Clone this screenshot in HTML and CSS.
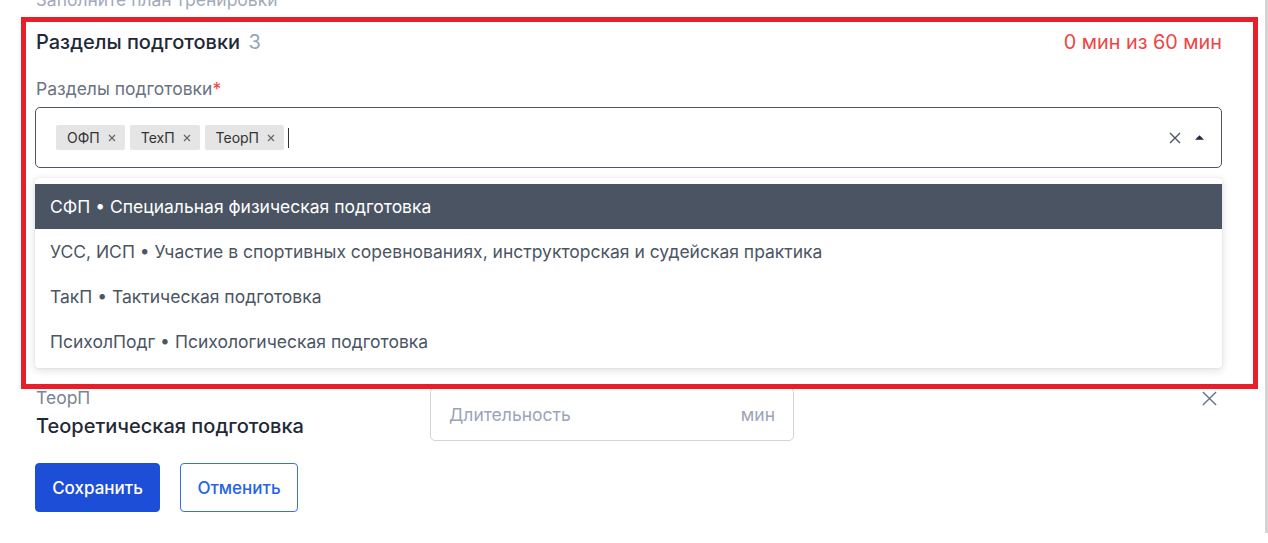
FILE: index.html
```html
<!DOCTYPE html>
<html lang="ru">
<head>
    <meta charset="UTF-8">
    <meta name="viewport" content="width=device-width, initial-scale=1.0">
    <title>План тренировки</title>
    <link rel="stylesheet" href="styles.css">
</head>
<body>
    <div class="page">
        <p class="subtitle">Заполните план тренировки</p>

        <div class="section-head">
            <h2 class="section-title">Разделы подготовки <span class="count">3</span></h2>
            <span class="time-total">0 мин из 60 мин</span>
        </div>

        <label class="field-label">Разделы подготовки<span class="req">*</span></label>
        <div class="select">
            <div class="select-box">
                <div class="chips">
                    <span class="chip">ОФП <svg class="chip-x" viewBox="0 0 8 8"><path d="M1 1L7 7M7 1L1 7"/></svg></span>
                    <span class="chip">ТехП <svg class="chip-x" viewBox="0 0 8 8"><path d="M1 1L7 7M7 1L1 7"/></svg></span>
                    <span class="chip">ТеорП <svg class="chip-x" viewBox="0 0 8 8"><path d="M1 1L7 7M7 1L1 7"/></svg></span>
                    <span class="caret"></span>
                </div>
                <div class="select-icons">
                    <svg class="clear-icon" viewBox="0 0 12 12"><path d="M1 1L11 11M11 1L1 11"/></svg>
                    <svg class="arrow-icon" viewBox="0 0 10 5"><path d="M0 5L5 0L10 5Z"/></svg>
                </div>
            </div>
            <ul class="menu">
                <li class="menu-item active">СФП • Специальная физическая подготовка</li>
                <li class="menu-item">УСС, ИСП • Участие в спортивных соревнованиях, инструкторская и судейская практика</li>
                <li class="menu-item">ТакП • Тактическая подготовка</li>
                <li class="menu-item">ПсихолПодг • Психологическая подготовка</li>
            </ul>
        </div>

        <div class="plan-rows">
            <div class="plan-row">
                <div class="plan-name">
                    <div class="plan-code">ТеорП</div>
                    <div class="plan-title">Теоретическая подготовка</div>
                </div>
                <div class="duration">
                    <span class="duration-placeholder">Длительность</span>
                    <span class="duration-unit">мин</span>
                </div>
                <button class="row-remove"><svg viewBox="0 0 16 16"><path d="M1 1L15 15M15 1L1 15"/></svg></button>
            </div>
        </div>

        <div class="actions">
            <button class="btn btn-primary">Сохранить</button>
            <button class="btn btn-outline">Отменить</button>
        </div>
    </div>

    <div class="annotation"></div>
    <div class="scrollbar"></div>
</body>
</html>
```

FILE: styles.css
```css
body {
    font-family: Inter, "Noto Sans", sans-serif;
    margin: 0;
    padding: 0;
    background: #fff;
    color: #1f2937;
    overflow: hidden;
}
.page {
    padding: 0 46px 0 35px;
}
.subtitle {
    margin: -12px 0 0 1px;
    font-size: 17.5px;
    line-height: 24px;
    color: #a0aabb;
}
.section-head {
    display: flex;
    justify-content: space-between;
    align-items: center;
    height: 24px;
    margin-top: 18px;
}
.section-title {
    margin: 0 0 0 1px;
    font-size: 20px;
    font-weight: 500;
    color: #1f2937;
}
.section-title .count {
    margin-left: 3px;
    color: #94a3b8;
    font-weight: 400;
}
.time-total {
    font-size: 19.8px;
    color: #ef4444;
}
.field-label {
    display: block;
    margin: 25px 0 8px 1px;
    font-size: 17.5px;
    line-height: 20px;
    color: #6b7280;
}
.req {
    color: #ef4444;
}
.select {
    position: relative;
}
.select-box {
    display: flex;
    align-items: center;
    justify-content: space-between;
    height: 61px;
    box-sizing: border-box;
    border: 1px solid #4b5563;
    border-radius: 5px;
    padding: 0 17px 0 20px;
}
.chips {
    display: flex;
    align-items: center;
    gap: 5px;
}
.chip {
    display: flex;
    align-items: center;
    gap: 8px;
    height: 25px;
    padding: 0 9px 0 11px;
    background: #e5e5e5;
    border-radius: 2px;
    font-size: 14px;
    color: #333;
}
.chip-x {
    width: 8px;
    height: 8px;
    stroke: #666;
    stroke-width: 1.2;
    fill: none;
}
.caret {
    width: 1px;
    height: 20px;
    margin-left: -1px;
    background: #333;
}
.select-icons {
    display: flex;
    align-items: center;
    gap: 14px;
}
.clear-icon {
    width: 12px;
    height: 12px;
    stroke: #4b5563;
    stroke-width: 1.4;
    fill: none;
}
.arrow-icon {
    width: 9px;
    height: 5px;
    fill: #1e2a4a;
}
.menu {
    position: absolute;
    top: calc(100% + 10px);
    left: 0;
    right: 0;
    margin: 0;
    padding: 6px 0 4px;
    list-style: none;
    background: #fff;
    border-radius: 3px;
    box-shadow: 0 2px 8px rgba(0, 0, 0, 0.14), 0 0 1px rgba(0, 0, 0, 0.2);
    z-index: 5;
}
.menu-item {
    height: 45px;
    line-height: 45px;
    padding: 0 15px;
    font-size: 17.5px;
    color: #4b5563;
    white-space: nowrap;
}
.menu-item.active {
    background: #4a5462;
    color: #fff;
}
.plan-rows {
    margin-top: 219px;
}
.plan-row {
    display: flex;
    align-items: flex-start;
    height: 54px;
}
.plan-name {
    width: 395px;
    padding-top: 1px;
}
.plan-code {
    font-size: 17.5px;
    line-height: 20px;
    color: #7b8494;
    margin-left: 1px;
}
.plan-title {
    margin-top: 6px;
    font-size: 20px;
    font-weight: 500;
    line-height: 24px;
    color: #1f2937;
    margin-left: 1px;
}
.duration {
    display: flex;
    justify-content: space-between;
    align-items: center;
    width: 364px;
    height: 54px;
    box-sizing: border-box;
    border: 1px solid #d1d5db;
    border-radius: 5px;
    padding: 0 18px;
    font-size: 17.5px;
    color: #9aa5b8;
}
.row-remove {
    margin-left: auto;
    margin-right: 5px;
    margin-top: 4px;
    padding: 0;
    border: none;
    background: none;
    width: 16px;
    height: 16px;
}
.row-remove svg {
    width: 15px;
    height: 15px;
    stroke: #64748b;
    stroke-width: 1.5;
    fill: none;
}
.actions {
    display: flex;
    gap: 20px;
    margin-top: 22px;
}
.btn {
    height: 49px;
    padding: 0 16px;
    border-radius: 4px;
    font-family: inherit;
    font-size: 17px;
    font-weight: 500;
    cursor: pointer;
}
.btn-primary {
    width: 125px;
    background: #1d4ed8;
    border: 1px solid #1d4ed8;
    color: #fff;
}
.btn-outline {
    width: 118px;
    background: #fff;
    border: 1px solid #3b6fe6;
    color: #2563eb;
}
.annotation {
    position: absolute;
    left: 21px;
    top: 17px;
    width: 1237px;
    height: 372px;
    box-sizing: border-box;
    border: 5px solid #e81e28;
    pointer-events: none;
    z-index: 10;
}
.scrollbar {
    position: fixed;
    top: 0;
    right: 0;
    width: 3px;
    height: 533px;
    background: #d4d4d4;
}
```
